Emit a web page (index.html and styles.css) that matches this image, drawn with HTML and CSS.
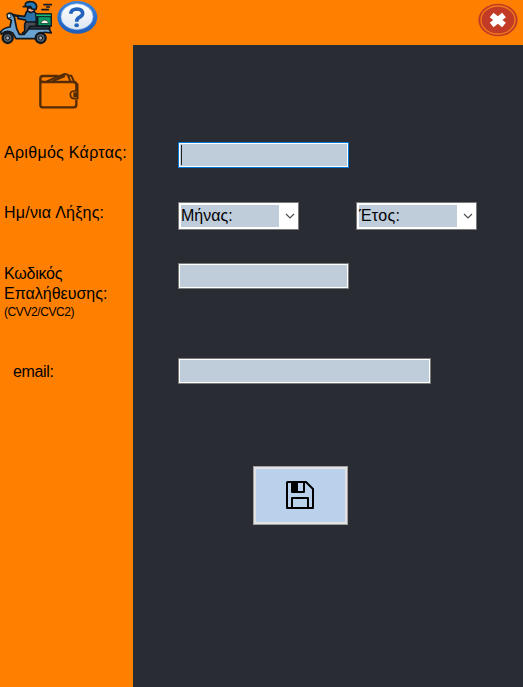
FILE: index.html
```html
<!DOCTYPE html>
<html lang="el">
<head>
<meta charset="utf-8">
<title>Κάρτα</title>
<link rel="stylesheet" href="styles.css">
</head>
<body>
<header class="topbar">
  <svg class="scooter" viewBox="0 0 156 135" stroke="#101820" stroke-width="5" stroke-linejoin="round" stroke-linecap="round">
    <path d="M132 14H155M126 29H145M140 21H148" fill="none"/>
    <path d="M80 34L100 33L110 42L108 68H80L76 60L54 56V47L74 49Z" fill="#2872a8"/>
    <path d="M83 23V33L92 38L102 34L106 24Z" fill="#f2a58c"/>
    <path d="M76 20V12Q80 4 92 5Q109 6 110 20L108 28L96 27L92 20H70Z" fill="#2478b8"/>
    <path d="M77 66H108V80L86 84V104H68V98L74 94V72Z" fill="#4b4e58"/>
    <rect x="113" y="42" width="41" height="36" fill="#079c63"/>
    <path d="M108 42H154V50H108Z" fill="#16b978" stroke-width="3"/>
    <path d="M122 70Q124 60 134 60Q144 60 146 70Z" fill="#f3f6df" stroke-width="2"/>
    <path d="M35 44L54 48" fill="none" stroke-width="7"/>
    <path d="M22 43Q27 37 36 41L43 51L50 86L58 103H73L89 84H146L154 99L138 97Q122 94 106 116H48L38 99Q20 87 4 103L2 95Q13 82 30 81L34 61L23 54Z" fill="#6aa3cf"/>
    <path d="M22 43L31 41L33 52L25 54Z" fill="#d7edf5" stroke-width="2"/>
    <path d="M89 79H149V87H89Z" fill="#35424f"/>
    <circle cx="23" cy="114" r="15" fill="#59616a" stroke-width="7"/>
    <circle cx="23" cy="114" r="6" fill="#a7adb2" stroke-width="3"/>
    <circle cx="122" cy="114" r="15" fill="#59616a" stroke-width="7"/>
    <circle cx="122" cy="114" r="6" fill="#a7adb2" stroke-width="3"/>
  </svg>
  <svg class="help" viewBox="0 0 123 102">
    <defs>
      <linearGradient id="ring" x2="0" y2="1"><stop stop-color="#3d83dd"/><stop offset="1" stop-color="#1c5db8"/></linearGradient>
      <linearGradient id="face" x2="0" y2="1"><stop stop-color="#fff"/><stop offset="1" stop-color="#dce5f0"/></linearGradient>
    </defs>
    <ellipse cx="61" cy="52" rx="60" ry="49" fill="url(#ring)"/>
    <ellipse cx="60" cy="50" rx="48" ry="39" fill="url(#face)" stroke="#84b4ed" stroke-width="2"/>
    <path d="M41 41Q43 27 60 27Q77 28 77 40Q77 47 67 52Q59 56 59 65" fill="none" stroke="#2262bd" stroke-width="11"/>
    <ellipse cx="59" cy="76" rx="7" ry="6" fill="#2262bd"/>
  </svg>
  <svg class="close" viewBox="0 0 120 102">
    <ellipse cx="60" cy="51" rx="59" ry="49" fill="#c23b26"/>
    <ellipse cx="60" cy="51" rx="51" ry="42" fill="none" stroke="#f07a17" stroke-width="4"/>
    <path d="M41 36L78 66M78 36L41 66" stroke="#fff" stroke-width="18"/>
  </svg>
</header>
<div class="body">
  <aside class="sidebar rows">
    <div class="wallet-row">
      <svg class="wallet" viewBox="0 0 120 108" fill="none" stroke="#532b07" stroke-width="7" stroke-linejoin="round">
        <path d="M4 18V96Q4 103 11 103H104Q112 103 112 96V80M112 54V35Q112 27 104 27H12Q4 27 4 18Q4 9 12 9H58"/>
        <path d="M23 25L77 3L86 5L94 25M40 25L78 9M89 8H97L105 25" stroke-width="6"/>
        <path d="M106 28L116 34V77H104Q94 75 94 65Q94 55 104 54H115" stroke-width="5"/>
        <path d="M103 58H115V73H103Z" fill="#532b07" stroke="none"/>
      </svg>
    </div>
    <label class="card-label" for="card">Αριθμός Κάρτας:</label>
    <label class="month-label" for="month">Ημ/νια Λήξης:</label>
    <label for="code"><span class="tight">Κωδικός</span><br>Επαλήθευσης:<small>(CVV2/CVC2)</small></label>
    <label class="email-label" for="email">email:</label>
  </aside>
  <main class="rows">
    <div class="field-row card-row"><div class="field focused" id="card"><span class="caret"></span></div></div>
    <div class="field-row expiry-row">
      <div class="combo" id="month"><span class="value">Μήνας:</span><svg class="chevron" viewBox="0 0 10 6"><path d="M1 1L5 5L9 1"/></svg></div>
      <div class="combo" id="year"><span class="value year">Έτος:</span><svg class="chevron" viewBox="0 0 10 6"><path d="M1 1L5 5L9 1"/></svg></div>
    </div>
    <div class="field-row code-row"><div class="field" id="code"></div></div>
    <div class="field-row email-row"><div class="field wide" id="email"></div></div>
    <div class="field-row save-row">
      <button class="save" aria-label="Αποθήκευση">
        <svg viewBox="0 0 28 28" fill="none" stroke="#000" stroke-width="2" stroke-linejoin="round">
          <path d="M1.500 1H20L27 8V27H1V1.500Z"/>
          <path d="M6 1V11H18V1M6 27V17H22V27"/>
          <path d="M6 1H12V11H6Z" fill="#000" stroke="none"/>
        </svg>
      </button>
    </div>
  </main>
</div>
</body>
</html>
```
FILE: styles.css
```css
* { box-sizing: border-box; }
body {
  margin: 0;
  height: 687px;
  overflow: hidden;
  font: 16px/20px "Liberation Sans", Arial, sans-serif;
  color: #000;
}
svg { display: block; flex: none; }
.topbar {
  display: flex;
  height: 45px;
  background: #ff8000;
}
.scooter { width: 52px; height: 45px; }
.help { width: 41px; height: 34px; margin-left: 5px; }
.close { width: 40px; height: 34px; margin: 3px 5px 0 auto; }
.body { display: flex; height: 642px; background: #2a2c34; }
.rows {
  display: grid;
  align-content: start;
}
.sidebar {
  width: 133px;
  padding-left: 4px;
  background: #ff8000;
  grid-template-rows: 98px 60px 61px 98px 60px;
  white-space: nowrap;
}
.wallet-row { padding: 28px 0 0 35px; }
.wallet { width: 40px; height: 36px; }
.card-label { letter-spacing: 0.29px; }
.month-label { letter-spacing: 0.22px; }
.tight { letter-spacing: -0.25px; }
small { display: block; font-size: 12px; line-height: 16px; letter-spacing: -0.42px; }
.email-label { padding-left: 9px; letter-spacing: -0.35px; }
main {
  flex: 1;
  padding: 97px 0 0 45px;
  grid-template-rows: 60px 61px 95px 108px 59px;
}
.field-row { display: flex; align-items: flex-start; }
.expiry-row { gap: 57px; }
.field {
  width: 171px;
  height: 26px;
  padding: 1px;
  border: 1px solid #7a7a7a;
  background: #bfcddb;
  box-shadow: inset 0 0 0 1px #fff;
}
.wide { width: 253px; }
.focused { border-color: #0078d7; }
.caret { display: block; width: 1px; height: 20px; margin: 1px; background: #222; }
.combo {
  display: flex;
  align-items: center;
  width: 121px;
  height: 28px;
  padding: 2px;
  border: 1px solid #7a7a7a;
  background: #fff;
}
.value { width: 98px; height: 22px; line-height: 21px; background: #bfcddb; }
.year { letter-spacing: 0.3px; }
.chevron { width: 10px; height: 6px; margin-left: 6px; fill: none; stroke: #505050; stroke-width: 1.2; }
.save-row { padding-left: 75px; }
.save {
  display: flex;
  align-items: center;
  justify-content: center;
  width: 95px;
  height: 59px;
  padding: 0 2px 2px 0;
  border: 1px solid #a0a0a0;
  background: #b9d1ea;
  box-shadow: inset 0 0 0 2px #e3e3e3;
}
.save svg { width: 28px; height: 28px; }
```
